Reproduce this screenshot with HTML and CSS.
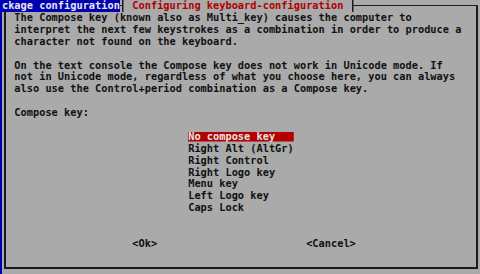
FILE: index.html
```html
<!DOCTYPE html>
<html lang="en">
<head>
    <meta charset="UTF-8">
    <meta name="viewport" content="width=device-width, initial-scale=1.0">
    <title>Configuring keyboard-configuration</title>
    <link rel="stylesheet" href="styles.css">
</head>
<body>

    <div class="screen">
        <div class="edge"></div>
        <div class="term">
            <div class="topline">
                <span class="backtitle">ckage configuration</span>
                <span class="tee-left"></span>
                <span class="title"> Configuring keyboard-configuration </span>
                <span class="tee-right"></span>
                <span class="rule"></span>
            </div>

            <div class="dialog">
                <p class="text">The Compose key (known also as Multi_key) causes the computer to<br>interpret the next few keystrokes as a combination in order to produce a<br>character not found on the keyboard.</p>
                <p class="text">On the text console the Compose key does not work in Unicode mode. If<br>not in Unicode mode, regardless of what you choose here, you can always<br>also use the Control+period combination as a Compose key.</p>
                <p class="text">Compose key:</p>

                <ul class="choices">
                    <li class="selected">No compose key</li>
                    <li>Right Alt (AltGr)</li>
                    <li>Right Control</li>
                    <li>Right Logo key</li>
                    <li>Menu key</li>
                    <li>Left Logo key</li>
                    <li>Caps Lock</li>
                </ul>

                <div class="buttons">
                    <span>&lt;Ok&gt;</span>
                    <span>&lt;Cancel&gt;</span>
                </div>
            </div>
        </div>
    </div>

</body>
</html>
```

FILE: styles.css
```css
body {
    margin: 0;
    background-color: #aaaaaa;
    font-family: "DejaVu Sans Mono", monospace;
    font-weight: bold;
    font-size: 10.32px;
    line-height: 11.9px;
    color: #111111;
    overflow: hidden;
}

.screen {
    display: flex;
    height: 274px;
}

.edge {
    width: 2px;
    background-color: #0000b0;
}

.term {
    flex: 1;
    display: flex;
    flex-direction: column;
}

/* top row: back title + window title on the frame */
.topline {
    display: flex;
    height: 11.9px;
    white-space: pre;
}

.backtitle {
    width: 19ch;
    background-color: #0000b0;
    color: #e6e6f0;
    overflow: hidden;
}

.tee-left {
    width: 1ch;
    background:
        linear-gradient(#1c1c1c, #1c1c1c) center / 1.5px 100% no-repeat,
        linear-gradient(#1c1c1c, #1c1c1c) left center / 50% 1px no-repeat;
}

.title {
    color: #b00000;
}

.tee-right {
    width: 1ch;
    background:
        linear-gradient(#1c1c1c, #1c1c1c) center / 1.5px 100% no-repeat,
        linear-gradient(#1c1c1c, #1c1c1c) right center / 50% 1px no-repeat;
}

.rule {
    width: 20ch;
    background:
        linear-gradient(#1c1c1c, #1c1c1c) left center / calc(100% - 0.5ch + 1px) 1px no-repeat,
        linear-gradient(#1c1c1c, #1c1c1c) right calc(0.5ch - 1px) bottom / 2px 50% no-repeat;
}

/* window body */
.dialog {
    box-sizing: border-box;
    width: calc(76ch + 2px);
    margin-left: calc(0.5ch - 1px);
    padding: 0 0 16.85px calc(1.5ch - 1px);
    border: 2px solid #1c1c1c;
    border-top: none;
}

.text {
    margin: 0 0 11.9px 0;
    white-space: nowrap;
}

.choices {
    list-style: none;
    margin: 0 0 23.8px 28ch;
    padding: 0;
    width: 17ch;
}

.choices li {
    height: 11.9px;
    white-space: pre;
}

.choices li.selected {
    background: linear-gradient(#b40000, #b40000) center / 100% 9.5px no-repeat;
    color: #e4e4e4;
}

.buttons {
    display: flex;
    gap: 24ch;
    margin-left: 19ch;
}
```
